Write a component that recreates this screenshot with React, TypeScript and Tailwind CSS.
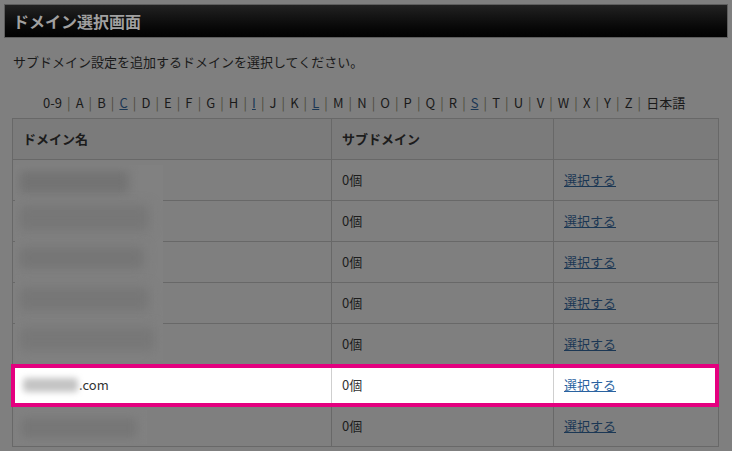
import React from "react";

const letters = ["0-9","A","B","C","D","E","F","G","H","I","J","K","L","M","N","O","P","Q","R","S","T","U","V","W","X","Y","Z","日本語"];
const linked = new Set(["C","I","L","S"]);

function Row({ highlight, children }: { highlight?: boolean; children?: React.ReactNode }) {
  return (
    <div className={`flex h-[41px] border-b ${highlight ? "border-[#6a6a6a] bg-white" : "border-[#686868]"}`}>
      <div className={`w-[319px] border-r ${highlight ? "border-[#cfcfcf]" : "border-[#686868]"} flex items-center pl-[10px] text-[13px] text-[#222]`}>
        {children}
      </div>
      <div className={`w-[222px] border-r ${highlight ? "border-[#cfcfcf]" : "border-[#686868]"} flex items-center pl-[10px] text-[13px] ${highlight ? "text-[#333]" : "text-[#1c1c1c]"}`}>
        0個
      </div>
      <div className="flex-1 flex items-center pl-[10px] text-[13px]">
        <a className={`underline ${highlight ? "text-[#2a62a0] decoration-[#2a62a0]" : "text-[#1b3754] decoration-[#1b3754]"}`}>選択する</a>
      </div>
    </div>
  );
}

export default function App() {
  return (
    <div
      className="relative w-[732px] h-[451px] overflow-hidden bg-[#7f7f7f] pt-[4px]"
      style={{ fontFamily: '"Noto Sans CJK JP", "Noto Sans", sans-serif' }}
    >
      <div className="mx-[4px] h-[34px] border border-[#5e5e5e] bg-gradient-to-b from-[#222222] to-[#020202] flex items-center pl-[8px]">
        <span className="text-[16px] font-bold text-[#a0a0a0] leading-none">ドメイン選択画面</span>
      </div>
      <p className="mt-[14px] ml-[13px] text-[13px] leading-[20px] text-[#1a1a1a]">
        サブドメイン設定を追加するドメインを選択してください。
      </p>
      <div className="mt-[22px] ml-[43px] w-[643px] flex justify-between items-center text-[13px] leading-[18px] text-[#1a1a1a]">
        {letters.map((l, i) => (
          <React.Fragment key={l}>
            {i > 0 && <span className="text-[#4e4a3c]">|</span>}
            {linked.has(l) ? (
              <a className="underline text-[#1b3754]">{l}</a>
            ) : (
              <span>{l}</span>
            )}
          </React.Fragment>
        ))}
      </div>
      <div className="relative mt-[6px] ml-[12px] w-[707px] border-t border-l border-r border-[#686868]">
        <div className="flex h-[41px] border-b border-[#686868] bg-[#7b7b7b] text-[13px] font-bold text-[#1c1c1c]">
          <div className="w-[319px] border-r border-[#686868] flex items-center pl-[10px]">ドメイン名</div>
          <div className="w-[222px] border-r border-[#686868] flex items-center pl-[10px]">サブドメイン</div>
          <div className="flex-1" />
        </div>
        <Row />
        <Row />
        <Row />
        <Row />
        <Row />
        <Row highlight>
          <span className="relative inline-block w-[55px] h-[14px] mr-[1px]">
            <span className="absolute inset-0 bg-[#c4c4c4] blur-[3px] rounded" />
          </span>
          <span className="text-[#333]">.com</span>
        </Row>
        <Row />

        {/* blurred domain names */}
        <div className="absolute left-[2px] top-[46px] w-[148px] h-[196px] bg-[#818181] overflow-hidden">
          <div className="absolute left-[4px] top-[6px] w-[110px] h-[22px] bg-[#737373] blur-[5px]" />
          <div className="absolute left-[4px] top-[40px] w-[130px] h-[26px] bg-[#767676] blur-[6px]" />
          <div className="absolute left-[4px] top-[82px] w-[125px] h-[22px] bg-[#757575] blur-[6px]" />
          <div className="absolute left-[4px] top-[122px] w-[130px] h-[24px] bg-[#767676] blur-[6px]" />
          <div className="absolute left-[4px] top-[162px] w-[136px] h-[24px] bg-[#777777] blur-[6px]" />
        </div>
        <div className="absolute left-[2px] top-[291px] w-[132px] h-[34px] bg-[#818181] overflow-hidden">
          <div className="absolute left-[6px] top-[8px] w-[116px] h-[20px] bg-[#767676] blur-[5px]" />
        </div>

        {/* highlight box */}
        <div className="absolute left-[-2px] top-[245px] w-[708px] h-[43px] border-4 border-[#e4007f] pointer-events-none" />
      </div>
    </div>
  );
}
